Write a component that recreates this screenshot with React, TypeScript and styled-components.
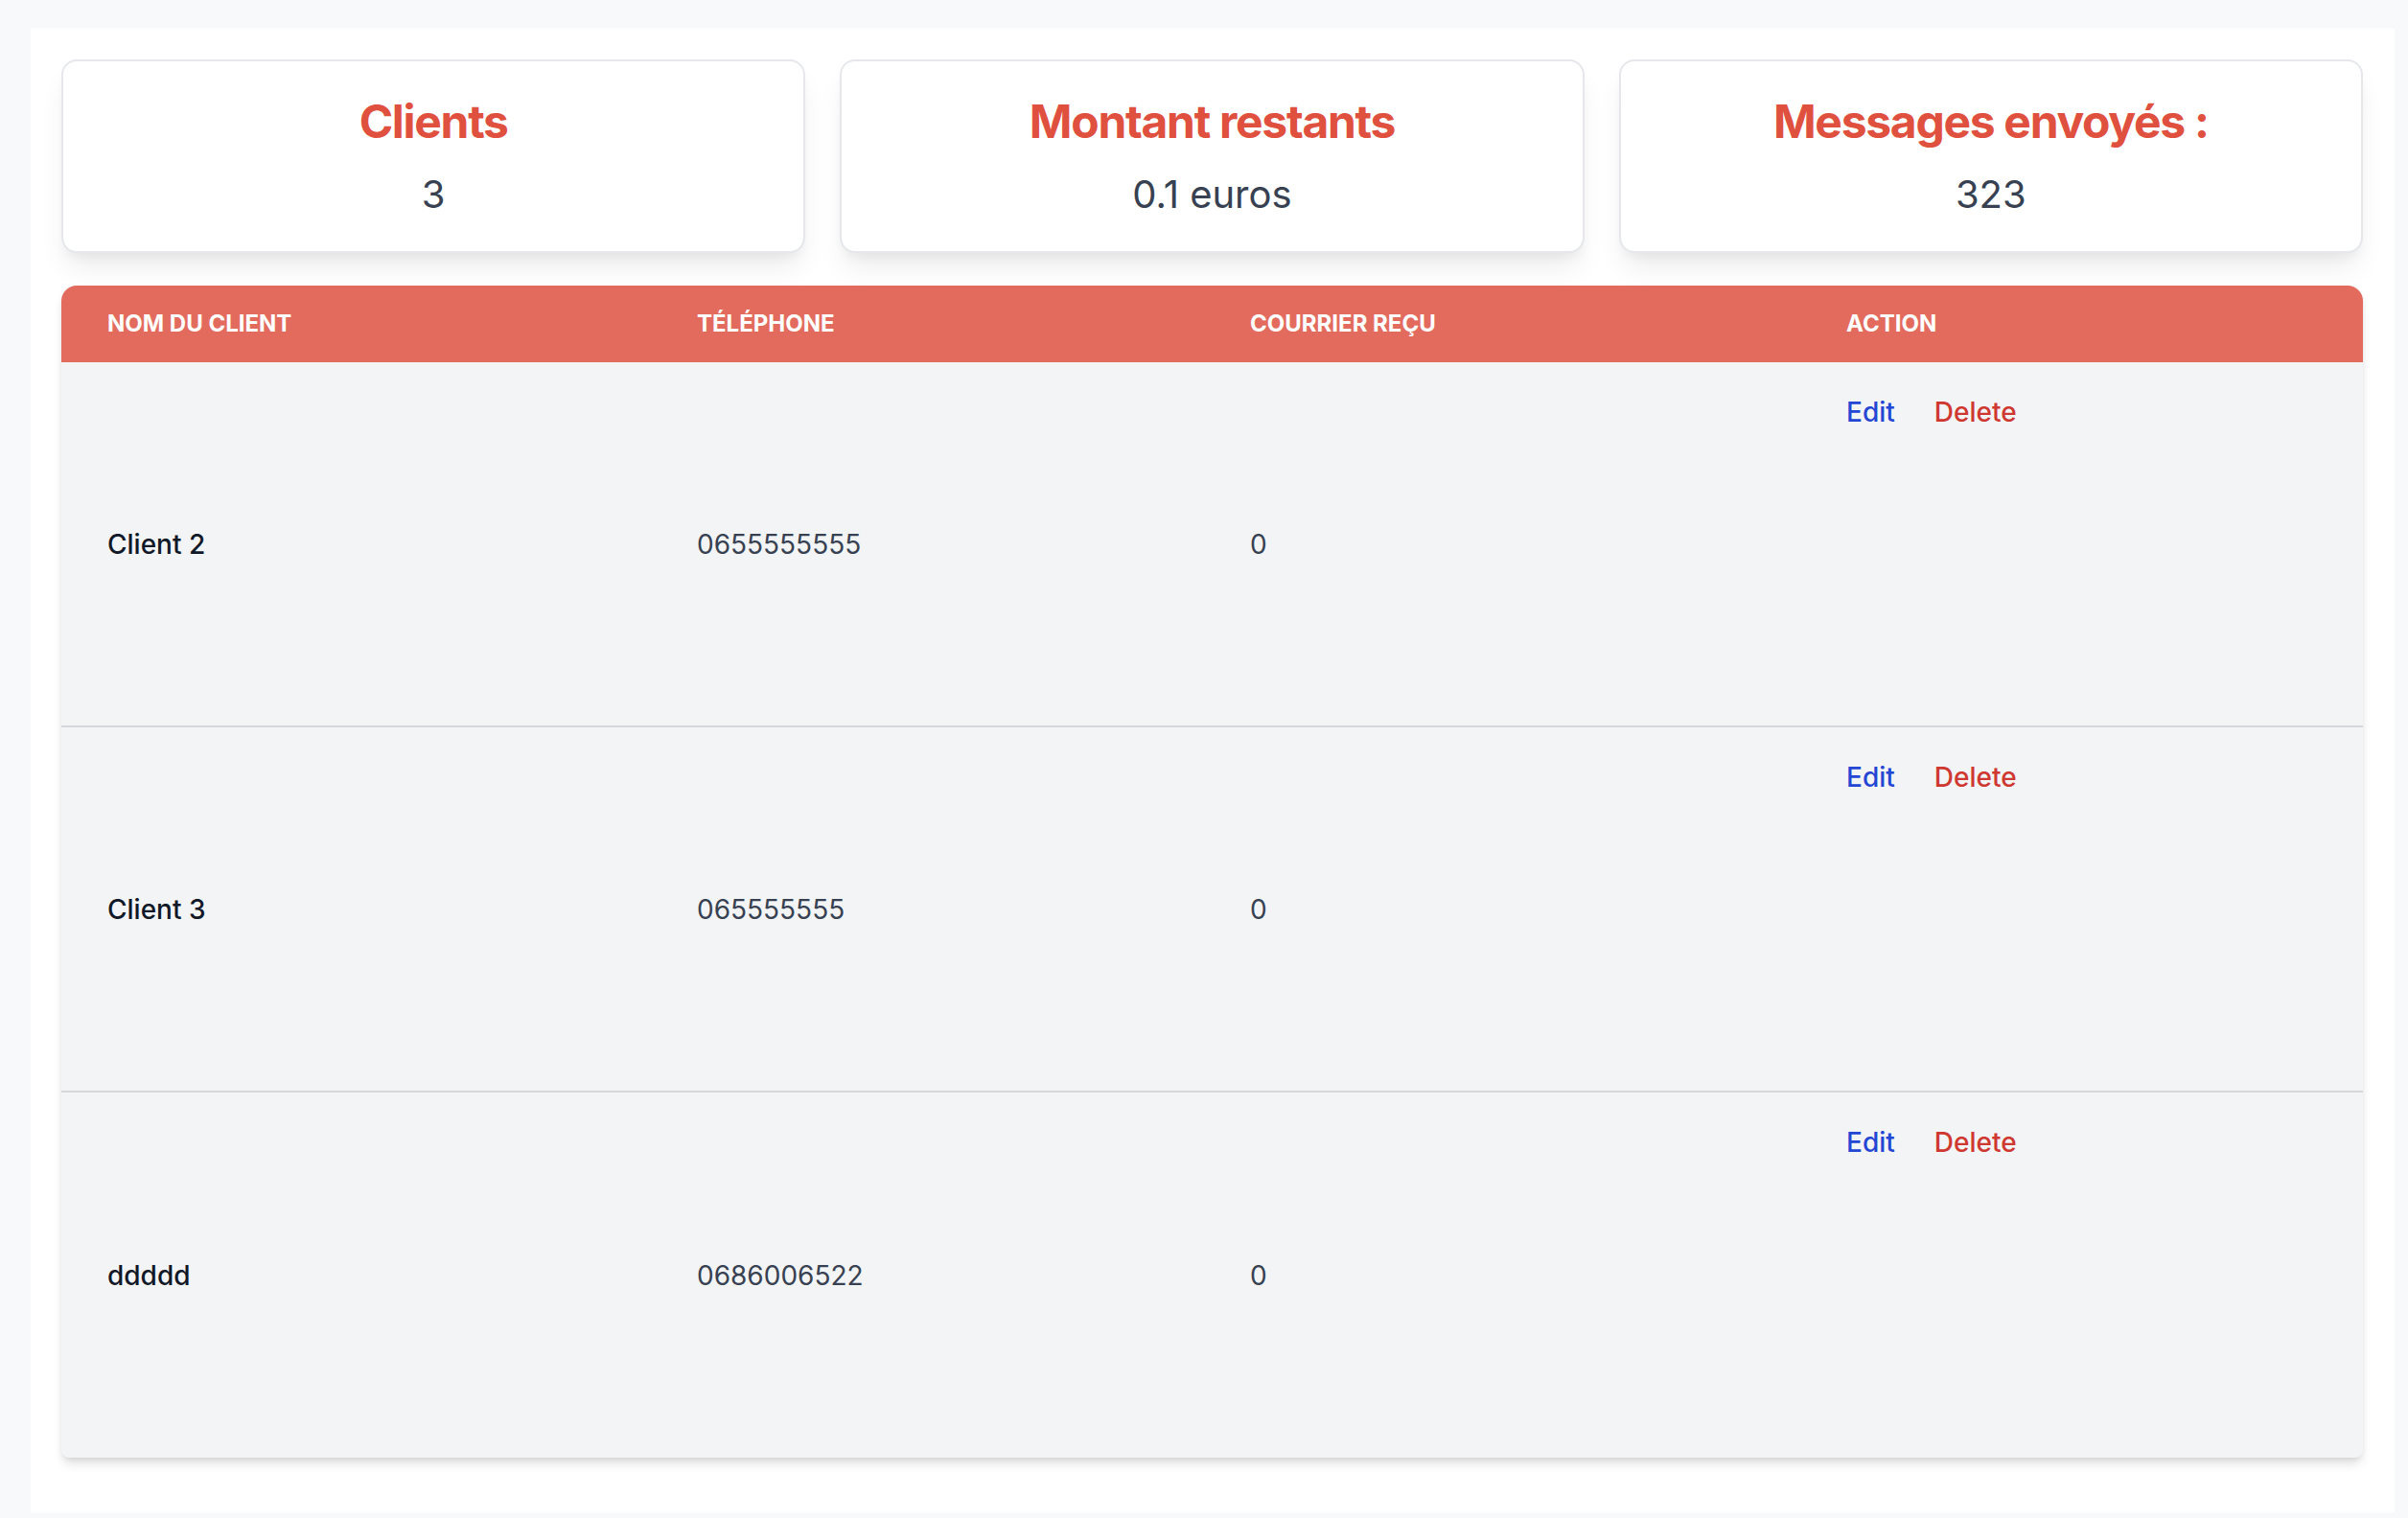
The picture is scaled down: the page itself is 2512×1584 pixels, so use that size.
import React from 'react';
import styled, { createGlobalStyle } from 'styled-components';

const GlobalStyle = createGlobalStyle`
  html, body {
    margin: 0;
    padding: 0;
    background: #f8f9fb;
    font-family: Inter, "Noto Sans", sans-serif;
    overflow: hidden;
  }
  * {
    box-sizing: border-box;
  }
`;

const PanelEl = styled.main`
  margin: 30px 14px 0 32px;
  min-height: 1548px;
  padding: 32px 33px 57px 32px;
  background: #ffffff;
`;

const StatsGridEl = styled.section`
  display: grid;
  grid-template-columns: repeat(3, 1fr);
  gap: 36px;
`;

const StatCardEl = styled.div`
  display: flex;
  flex-direction: column;
  align-items: center;
  padding: 31px 16px;
  background: #ffffff;
  border: 2px solid #e5e7eb;
  border-radius: 16px;
  box-shadow: 0 20px 30px -6px rgba(0, 0, 0, 0.08), 0 8px 12px -4px rgba(0, 0, 0, 0.05);
`;

const StatTitleEl = styled.h2`
  margin: 0;
  font-size: 48px;
  line-height: 64px;
  font-weight: 700;
  letter-spacing: -1.3px;
  color: #e0503f;
`;

const StatValueEl = styled.p`
  margin: 16px 0 0;
  font-size: 40px;
  line-height: 56px;
  font-weight: 400;
  color: #374151;
`;

const TableEl = styled.section`
  margin-top: 34px;
  border-radius: 16px 16px 8px 8px;
  overflow: hidden;
  background: #f3f4f6;
  box-shadow: 0 8px 12px -2px rgba(0, 0, 0, 0.12), 0 3px 6px -2px rgba(0, 0, 0, 0.1);
`;

const COLUMNS = '615px 577px 622px 1fr';

const HeadRowEl = styled.div`
  display: grid;
  grid-template-columns: ${COLUMNS};
  height: 80px;
  align-items: center;
  background: #e36b5e;
`;

const HeadCellEl = styled.div`
  padding: 0 48px;
  font-size: 24px;
  line-height: 32px;
  font-weight: 700;
  text-transform: uppercase;
  letter-spacing: 0;
  color: #ffffff;
`;

const RowEl = styled.div<{ $divider: boolean }>`
  display: grid;
  grid-template-columns: ${COLUMNS};
  height: 381px;
  align-items: center;
  border-bottom: ${(p) => (p.$divider ? '2px solid #d5d7dc' : 'none')};
`;

const CellEl = styled.div<{ $strong?: boolean }>`
  padding: 0 48px;
  font-size: 28px;
  line-height: 40px;
  font-weight: ${(p) => (p.$strong ? 500 : 400)};
  color: ${(p) => (p.$strong ? '#111827' : '#374151')};
`;

const ActionCellEl = styled.div`
  align-self: start;
  display: flex;
  gap: 41px;
  padding: 32px 48px 0;
`;

const ActionLinkEl = styled.a<{ $danger?: boolean }>`
  font-size: 28px;
  line-height: 40px;
  font-weight: 500;
  color: ${(p) => (p.$danger ? '#cf3830' : '#2346d3')};
  text-decoration: none;
  cursor: pointer;
`;

const stats = [
  { title: 'Clients', value: '3' },
  { title: 'Montant restants', value: '0.1 euros' },
  { title: 'Messages envoyés :', value: '323' },
];

const clients = [
  { name: 'Client 2', phone: '0655555555', mail: '0' },
  { name: 'Client 3', phone: '065555555', mail: '0' },
  { name: 'ddddd', phone: '0686006522', mail: '0' },
];

const App: React.FC = () => (
  <>
    <GlobalStyle />
    <PanelEl>
      <StatsGridEl>
        {stats.map((s) => (
          <StatCardEl key={s.title}>
            <StatTitleEl>{s.title}</StatTitleEl>
            <StatValueEl>{s.value}</StatValueEl>
          </StatCardEl>
        ))}
      </StatsGridEl>

      <TableEl>
        <HeadRowEl>
          <HeadCellEl>Nom du client</HeadCellEl>
          <HeadCellEl>Téléphone</HeadCellEl>
          <HeadCellEl>Courrier reçu</HeadCellEl>
          <HeadCellEl>Action</HeadCellEl>
        </HeadRowEl>

        {clients.map((c, i) => (
          <RowEl key={c.name} $divider={i < clients.length - 1}>
            <CellEl $strong>{c.name}</CellEl>
            <CellEl>{c.phone}</CellEl>
            <CellEl>{c.mail}</CellEl>
            <ActionCellEl>
              <ActionLinkEl>Edit</ActionLinkEl>
              <ActionLinkEl $danger>Delete</ActionLinkEl>
            </ActionCellEl>
          </RowEl>
        ))}
      </TableEl>
    </PanelEl>
  </>
);

export default App;
